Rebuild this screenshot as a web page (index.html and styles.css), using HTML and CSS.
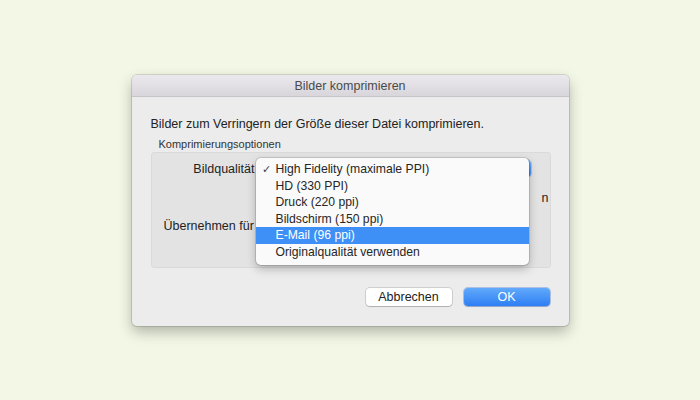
FILE: index.html
```html
<!DOCTYPE html>
<html lang="de">
<head>
  <meta charset="UTF-8" />
  <title>Bilder komprimieren</title>
  <link rel="stylesheet" href="styles.css">
</head>
<body>

  <div class="dialog">
    <div class="titlebar">Bilder komprimieren</div>

    <div class="content">
      <p class="intro">Bilder zum Verringern der Größe dieser Datei komprimieren.</p>
      <div class="group-title">Komprimierungsoptionen</div>

      <div class="group">
        <div class="row">
          <span class="label">Bildqualität</span>
          <div class="popup-button">
            <span class="popup-arrows"></span>

            <!-- offenes Menü -->
            <ul class="menu">
              <li class="checked">High Fidelity (maximale PPI)</li>
              <li>HD (330 PPI)</li>
              <li>Druck (220 ppi)</li>
              <li>Bildschirm (150 ppi)</li>
              <li class="active">E-Mail (96 ppi)</li>
              <li>Originalqualität verwenden</li>
            </ul>
          </div>
        </div>

        <div class="row row-check">
          <span class="check-text">n</span>
        </div>

        <div class="row row-apply">
          <span class="label label-apply">Übernehmen für</span>
        </div>
      </div>

      <div class="buttons">
        <button class="btn">Abbrechen</button>
        <button class="btn btn-primary">OK</button>
      </div>
    </div>
  </div>

</body>
</html>
```

FILE: styles.css
```css
body {
  margin: 0;
  height: 400px;
  background: #f3f8e6;
  font-family: 'Liberation Sans', Arial, sans-serif;
  color: #222;
  display: flex;
  align-items: center;
  justify-content: center;
}

.dialog {
  width: 437px;
  height: 251px;
  background: #ececec;
  border-radius: 5px;
  box-shadow: 0 0 0 1px rgba(0, 0, 0, 0.12), 0 6px 14px rgba(0, 0, 0, 0.28);
  overflow: hidden;
  display: flex;
  flex-direction: column;
}

.titlebar {
  height: 21px;
  line-height: 22px;
  text-align: center;
  font-size: 12.5px;
  color: #4a4a4a;
  background: linear-gradient(#ebe9ed, #d8d6da);
  border-bottom: 1px solid #c6c4c8;
}

.content {
  flex: 1;
  padding: 19px 18px 0 19px;
  display: flex;
  flex-direction: column;
}

.intro {
  margin: 0;
  font-size: 12.5px;
  line-height: 16px;
}

.group-title {
  margin: 5px 0 0 8px;
  font-size: 11px;
  line-height: 14px;
  color: #333;
}

.group {
  position: relative;
  height: 116px;
  margin-top: 1px;
  background: #e3e3e3;
  border: 1px solid #dadada;
  border-radius: 3px;
  padding-top: 7px;
  box-sizing: border-box;
}

.row {
  display: flex;
  align-items: center;
  height: 18px;
  font-size: 12.5px;
}

.label {
  width: 103px;
  text-align: right;
  padding-right: 4px;
}

.label-apply {
  width: auto;
  padding-left: 12px;
  white-space: nowrap;
}

.popup-button {
  position: relative;
  width: 272px;
  height: 17px;
  background: #fff;
  border-radius: 4px;
  box-shadow: 0 0 0 1px rgba(0, 0, 0, 0.15);
}

.popup-arrows {
  position: absolute;
  right: 0;
  top: 0;
  width: 16px;
  height: 17px;
  border-radius: 0 4px 4px 0;
  background: linear-gradient(#6cb2fb, #3a86f6);
}

.menu {
  position: absolute;
  left: -3px;
  top: -2px;
  width: 273px;
  margin: 0;
  padding: 3px 0 4px;
  list-style: none;
  background: #fafafa;
  border-radius: 5px;
  box-shadow: 0 0 0 1px rgba(0, 0, 0, 0.12), 0 4px 10px rgba(0, 0, 0, 0.25);
  z-index: 10;
}

.menu li {
  position: relative;
  height: 16.6px;
  line-height: 16.6px;
  padding-left: 20px;
  font-size: 12.2px;
  color: #262626;
}

.menu li.checked::before {
  content: "\2713";
  position: absolute;
  left: 6px;
  font-size: 11px;
  color: #444;
}

.menu li.active {
  background: #3e8ff6;
  color: #fff;
}

.row-check {
  margin-top: 11px;
  justify-content: flex-end;
  padding-right: 1px;
}

.row-apply {
  margin-top: 10px;
}

.buttons {
  display: flex;
  justify-content: flex-end;
  gap: 12px;
  margin-top: 20px;
  padding-right: 1px;
}

.btn {
  width: 86px;
  height: 18px;
  padding: 0;
  font-family: inherit;
  font-size: 12.5px;
  color: #222;
  background: #fff;
  border: none;
  border-radius: 4px;
  box-shadow: 0 0 0 1px rgba(0, 0, 0, 0.12), 0 1px 1px rgba(0, 0, 0, 0.15);
}

.btn-primary {
  color: #fff;
  background: linear-gradient(#62aafb, #2e7ef5);
  box-shadow: 0 0 0 1px rgba(30, 90, 200, 0.3), 0 1px 1px rgba(0, 0, 0, 0.15);
}
```
